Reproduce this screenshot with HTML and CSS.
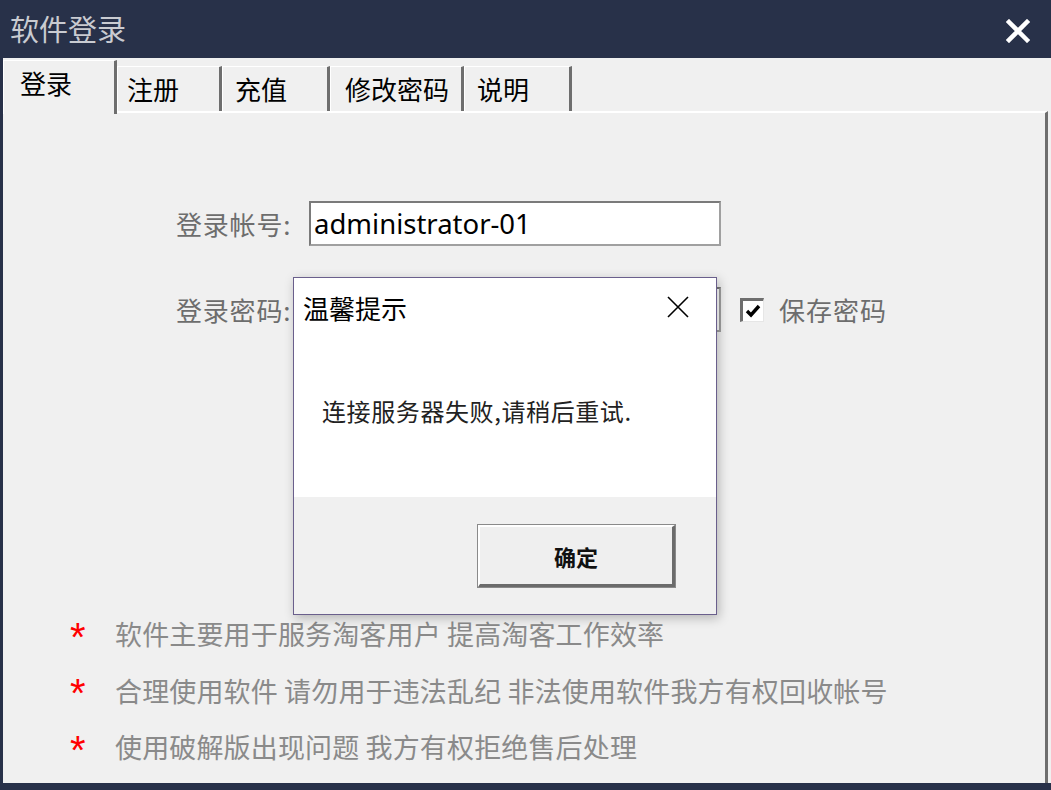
FILE: index.html
```html
<!DOCTYPE html>
<html lang="zh-CN">
<head>
    <meta charset="UTF-8">
    <title>软件登录</title>
    <link rel="stylesheet" href="styles.css">
</head>
<body>
    <div class="window">
        <!-- title bar -->
        <div class="titlebar">
            <span class="title">软件登录</span>
            <svg class="close" width="24" height="24" viewBox="0 0 24 24">
                <path d="M3 3 L21 21 M21 3 L3 21" stroke="#fff" stroke-width="4.5" stroke-linecap="square"/>
            </svg>
        </div>

        <div class="client">
            <!-- tab strip -->
            <div class="tabs">
                <div class="tab active">登录</div>
                <div class="tab">注册</div>
                <div class="tab">充值</div>
                <div class="tab">修改密码</div>
                <div class="tab">说明</div>
            </div>

            <div class="panel">
                <div class="form">
                    <div class="row">
                        <label class="label">登录帐号:</label>
                        <div class="input">administrator-01</div>
                    </div>
                    <div class="row">
                        <label class="label">登录密码:</label>
                        <div class="input"></div>
                        <span class="checkbox">
                            <svg width="16" height="14" viewBox="0 0 16 14">
                                <path d="M2 7 L6 11 L14 2" fill="none" stroke="#000" stroke-width="3.4"/>
                            </svg>
                        </span>
                        <span class="check-text">保存密码</span>
                    </div>
                </div>

                <ul class="notes">
                    <li><span class="star">*</span>软件主要用于服务淘客用户 提高淘客工作效率</li>
                    <li><span class="star">*</span>合理使用软件 请勿用于违法乱纪 非法使用软件我方有权回收帐号</li>
                    <li><span class="star">*</span>使用破解版出现问题 我方有权拒绝售后处理</li>
                </ul>
            </div>
        </div>

        <!-- message box -->
        <div class="dialog">
            <div class="dialog-head">
                <span class="dialog-title">温馨提示</span>
                <svg class="dialog-close" width="22" height="22" viewBox="0 0 22 22">
                    <path d="M1 1 L21 21 M21 1 L1 21" stroke="#000" stroke-width="1.6"/>
                </svg>
            </div>
            <div class="dialog-body">连接服务器失败,请稍后重试.</div>
            <div class="dialog-foot">
                <button class="ok-btn">确定</button>
            </div>
        </div>
    </div>
</body>
</html>
```

FILE: styles.css
```css
* {
    box-sizing: border-box;
    margin: 0;
    padding: 0;
}

body {
    width: 1051px;
    height: 790px;
    overflow: hidden;
    font-family: "Noto Sans CJK SC", "Noto Sans", sans-serif;
    background: #283149;
}

.window {
    position: relative;
    width: 1051px;
    height: 790px;
    background: #283149;
    display: flex;
    flex-direction: column;
}

.titlebar {
    height: 58px;
    display: flex;
    align-items: center;
    justify-content: space-between;
    padding: 0 21px 0 10px;
}

.title {
    color: #c9cbd1;
    font-size: 29px;
    line-height: 1;
    margin-top: -2px;
}

.close {
    margin-top: 4px;
}

.client {
    flex: 1;
    margin: 0 0 7px 3px;
    background: #f0f0f0;
    display: flex;
    flex-direction: column;
}

/* tabs */
.tabs {
    display: flex;
    align-items: flex-start;
    padding-top: 2px;
    height: 55px;
}

.tab {
    height: 46px;
    margin-top: 6px;
    padding: 0 0 0 9px;
    font-size: 26px;
    line-height: 44px;
    white-space: nowrap;
    color: #000;
    background: #f0f0f0;
    border-left: 1px solid #fff;
    border-top: 1px solid #fff;
    border-right: 3px solid #6e6e6e;
}

.tab:nth-child(2) { width: 105px; }
.tab:nth-child(3) { width: 108px; padding-left: 12px; }
.tab:nth-child(4) { width: 134px; padding-left: 14px; }
.tab:nth-child(5) { width: 108px; padding-left: 12px; }

.tab.active {
    width: 114px;
    height: 54px;
    margin-top: 0;
    padding-left: 16px;
    line-height: 44px;
    position: relative;
    z-index: 1;
}

.panel {
    flex: 1;
    margin-top: -2px;
    border-top: 2px solid #fff;
    border-right: 3px solid #6e6e6e;
    margin-right: 3px;
    display: flex;
    flex-direction: column;
}

/* form */
.form {
    padding: 88px 0 0 173px;
    display: flex;
    flex-direction: column;
    gap: 41px;
}

.row {
    display: flex;
    align-items: center;
    height: 45px;
}

.label {
    width: 133px;
    font-size: 26px;
    letter-spacing: 0.8px;
    color: #6d6d6d;
    line-height: 1;
}

.input {
    width: 412px;
    height: 45px;
    background: #fff;
    border: 2px solid #7a7a7a;
    border-right-color: #a0a0a0;
    border-bottom-color: #a0a0a0;
    font-family: "Noto Sans", sans-serif;
    font-size: 27.5px;
    line-height: 41px;
    padding-left: 3px;
    color: #000;
}

.checkbox {
    width: 24px;
    height: 24px;
    margin-left: 19px;
    background: #fff;
    border-top: 3px solid #6e6e6e;
    border-left: 3px solid #6e6e6e;
    border-right: 1px solid #e6e6e6;
    border-bottom: 1px solid #e6e6e6;
    display: flex;
    align-items: center;
    justify-content: center;
}

.check-text {
    margin-left: 15px;
    font-size: 26px;
    letter-spacing: 1px;
    color: #6d6d6d;
    line-height: 1;
}

/* notes */
.notes {
    list-style: none;
    margin-top: auto;
    padding: 0 0 8px 67px;
    display: flex;
    flex-direction: column;
}

.notes li {
    height: 56.5px;
    display: flex;
    align-items: center;
    font-size: 27px;
    letter-spacing: 0.15px;
    color: #8a8a8a;
}

.star {
    width: 45px;
    color: #ff0000;
    font-family: "Liberation Sans", sans-serif;
    font-size: 40px;
    line-height: 1;
    padding-top: 6px;
}

/* dialog */
.dialog {
    position: absolute;
    left: 293px;
    top: 277px;
    width: 424px;
    height: 338px;
    background: #fff;
    border: 1px solid #6a5f8c;
    box-shadow: 2px 3px 10px rgba(0, 0, 0, 0.25);
    display: flex;
    flex-direction: column;
}

.dialog-head {
    height: 60px;
    display: flex;
    align-items: center;
    justify-content: space-between;
    padding: 0 27px 0 9px;
}

.dialog-title {
    font-size: 26px;
    color: #000;
    line-height: 1;
}

.dialog-close {
    margin-top: -3px;
}

.dialog-body {
    height: 159px;
    padding: 61px 0 0 28px;
    font-size: 24px;
    color: #222;
    line-height: 1;
    letter-spacing: 0.6px;
}

.dialog-foot {
    flex: 1;
    background: #f0f0f0;
    display: flex;
    justify-content: flex-end;
    align-items: flex-start;
    padding: 28px 41px 0 0;
}

.ok-btn {
    width: 197px;
    height: 62px;
    background: #efefef;
    border-top: 2px solid #fff;
    border-left: 2px solid #fff;
    border-right: 3px solid #6b6b6b;
    border-bottom: 3px solid #6b6b6b;
    outline: 1px solid #8a8a8a;
    font-family: "Noto Sans CJK SC", sans-serif;
    font-size: 22px;
    font-weight: bold;
    color: #111;
}
```
